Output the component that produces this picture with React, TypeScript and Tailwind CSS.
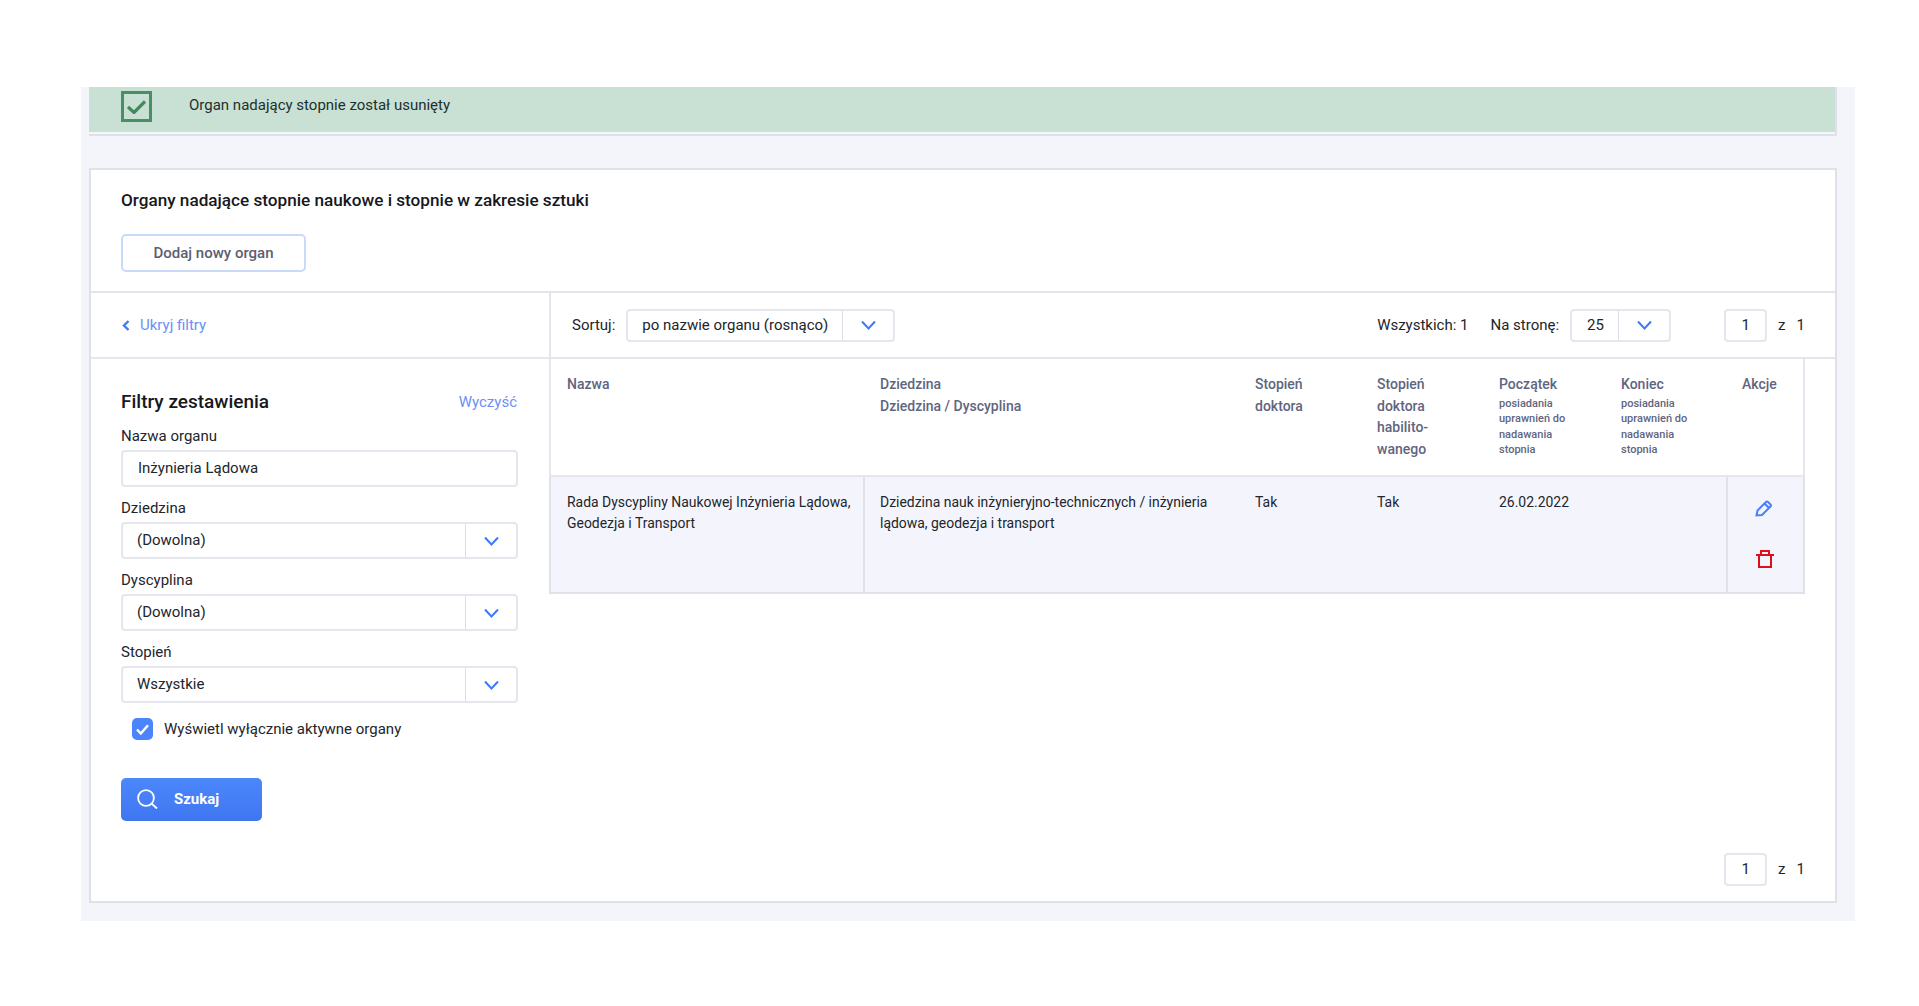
function Chevron() {
  return (
    <svg width="15" height="10" viewBox="0 0 15 10" fill="none" className="block">
      <path d="M1 1.5 L7.5 8.5 L14 1.5" stroke="#3f7bf6" strokeWidth="2" />
    </svg>
  );
}

function Label({ children }: { children: React.ReactNode }) {
  return <div className="h-[22px] text-[15px] leading-[25px] text-[#22252b]">{children}</div>;
}

function FilterSelect({ label, value }: { label: string; value: string }) {
  return (
    <div className="flex flex-col mb-[3px]">
      <div className="mb-[4px]">
        <Label>{label}</Label>
      </div>
      <SelectBox value={value} className="h-[37px] w-[397px]" textPad="pl-[14px]" arrowW="w-[51px]" />
    </div>
  );
}

function SelectBox({
  value,
  className,
  textPad,
  arrowW,
}: {
  value: string;
  className: string;
  textPad: string;
  arrowW: string;
}) {
  return (
    <div className={`flex items-stretch rounded-[4px] border-2 border-[#e6e7ee] bg-white ${className}`}>
      <div className={`flex flex-1 items-center text-[15px] text-[#22252b] ${textPad}`}>{value}</div>
      <div className={`flex items-center justify-center border-l border-[#dcdde5] ${arrowW}`}>
        <Chevron />
      </div>
    </div>
  );
}

function Pager() {
  return (
    <div className="flex items-center text-[15px] text-[#22252b]">
      <div className="flex h-[33px] w-[43px] items-center justify-center rounded-[4px] border-2 border-[#e6e7ee] bg-white">
        1
      </div>
      <span className="ml-[11px]">z</span>
      <span className="ml-[11px]">1</span>
    </div>
  );
}

function HeadCell({ className, children }: { className: string; children: React.ReactNode }) {
  return <div className={`pt-[15px] text-[14px] font-medium leading-[21.5px] text-[#5f6580] ${className}`}>{children}</div>;
}

function SubHead() {
  return (
    <div className="text-[11px] font-medium leading-[15.6px]">
      posiadania
      <br />
      uprawnień do
      <br />
      nadawania
      <br />
      stopnia
    </div>
  );
}

export default function App() {
  return (
    <div className="min-h-screen bg-white pt-[87px] [font-family:Roboto,sans-serif]">
      <div className="ml-[81px] flex h-[834px] w-[1774px] flex-col bg-[#f4f5fa] pl-[8px] pr-[18px]">
        <div className="h-[49px] w-full shrink-0 border-b-2 border-r-2 border-[#dfe0e8] bg-[#f4f8f6]">
          <div className="flex h-[45px] items-start bg-[#c9e0d4] pl-[32px]">
            <div className="mt-[4px] flex h-[31px] w-[31px] items-center justify-center border-[3px] border-[#4a8f63]">
              <svg width="19" height="14" viewBox="0 0 19 14" fill="none">
                <path d="M1 7 L7 12.5 L18 1.5" stroke="#44895c" strokeWidth="3.2" />
              </svg>
            </div>
            <div className="ml-[37px] mt-[8px] text-[15px] leading-[20px] text-[#22302a]">
              Organ nadający stopnie został usunięty
            </div>
          </div>
        </div>

        <div className="mt-[32px] flex h-[735px] w-full shrink-0 flex-col border-2 border-[#dfe0e8] bg-white">
          <div className="flex h-[123px] shrink-0 flex-col border-b-2 border-[#e3e4ec] pl-[30px]">
            <div className="mt-[20px] text-[17.15px] font-medium leading-[21px] text-[#16181d]">
              Organy nadające stopnie naukowe i stopnie w zakresie sztuki
            </div>
            <button className="mt-[23px] flex h-[38px] w-[185px] items-center justify-center rounded-[5px] border-2 border-[#c9d9f9] bg-white text-[15px] font-medium text-[#5b6070]">
              Dodaj nowy organ
            </button>
          </div>

          <div className="flex flex-1">
            <div className="flex w-[458px] shrink-0 flex-col">
              <div className="flex h-[66px] shrink-0 items-center border-b-2 border-[#e6e7ee] pl-[31px] text-[15px] text-[#6d8ff5]">
                <svg width="8" height="11" viewBox="0 0 8 11" fill="none">
                  <path d="M6.5 1 L2 5.5 L6.5 10" stroke="#3f7bf6" strokeWidth="2.4" />
                </svg>
                <span className="ml-[10px]">Ukryj filtry</span>
              </div>
              <div className="flex flex-col pl-[30px] pt-[31px]">
                <div className="flex w-[396px] items-center justify-between">
                  <div className="text-[19px] font-medium leading-[24px] text-[#16181d]">Filtry zestawienia</div>
                  <div className="text-[15px] text-[#6d8ff5]">Wyczyść</div>
                </div>
                <div className="mt-[10px] flex flex-col">
                  <div className="mb-[4px]">
                    <Label>Nazwa organu</Label>
                  </div>
                  <div className="mb-[9px] flex h-[37px] w-[397px] items-center rounded-[4px] border-2 border-[#e6e7ee] pl-[15px] text-[15px] text-[#22252b]">
                    Inżynieria Lądowa
                  </div>
                </div>
                <FilterSelect label="Dziedzina" value="(Dowolna)" />
                <div className="mt-[6px]">
                  <FilterSelect label="Dyscyplina" value="(Dowolna)" />
                </div>
                <div className="mt-[6px]">
                  <FilterSelect label="Stopień" value="Wszystkie" />
                </div>
                <div className="ml-[11px] mt-[12px] flex items-center">
                  <div className="flex h-[22px] w-[21px] items-center justify-center rounded-[5px] bg-[#4a85fb]">
                    <svg width="13" height="11" viewBox="0 0 13 11" fill="none">
                      <path d="M1 5.5 L4.8 9.5 L12 1.2" stroke="#fff" strokeWidth="2.4" />
                    </svg>
                  </div>
                  <span className="ml-[11px] text-[15px] text-[#22252b]">Wyświetl wyłącznie aktywne organy</span>
                </div>
                <button className="mt-[37px] flex h-[43px] w-[141px] items-center rounded-[5px] bg-gradient-to-b from-[#4c87fc] to-[#3f76f0] pl-[16px] text-[15px] font-bold text-white">
                  <svg width="21" height="20" viewBox="0 0 21 20" fill="none">
                    <circle cx="9" cy="9" r="7.9" stroke="#fff" strokeWidth="1.8" />
                    <path d="M14.5 14.5 L20 19.5" stroke="#fff" strokeWidth="1.8" />
                  </svg>
                  <span className="ml-[16px]">Szukaj</span>
                </button>
              </div>
            </div>

            <div className="flex min-w-0 flex-1 flex-col">
              <div className="flex h-[66px] shrink-0 items-center border-b-2 border-l-2 border-[#e3e4ec] pl-[21px] text-[15px] text-[#22252b]">
                <span>Sortuj:</span>
                <SelectBox
                  value="po nazwie organu (rosnąco)"
                  className="ml-[11px] h-[33px] w-[269px]"
                  textPad="pl-[14px]"
                  arrowW="w-[51px]"
                />
                <span className="ml-auto">Wszystkich: 1</span>
                <span className="ml-[22px]">Na stronę:</span>
                <SelectBox value="25" className="ml-[11px] h-[33px] w-[101px]" textPad="pl-[15px]" arrowW="w-[51px]" />
                <div className="ml-[53px] mr-[30px]">
                  <Pager />
                </div>
              </div>

              <div className="w-[1256px]">
                <div className="flex h-[118px] border-b-2 border-l-2 border-r-2 border-[#e6e7ee]">
                  <HeadCell className="w-[313px] pl-[16px]">Nazwa</HeadCell>
                  <HeadCell className="w-[375px] pl-[16px]">
                    Dziedzina
                    <br />
                    Dziedzina / Dyscyplina
                  </HeadCell>
                  <HeadCell className="w-[122px] pl-[16px]">
                    Stopień
                    <br />
                    doktora
                  </HeadCell>
                  <HeadCell className="w-[122px] pl-[16px]">
                    Stopień
                    <br />
                    doktora
                    <br />
                    habilito-
                    <br />
                    wanego
                  </HeadCell>
                  <HeadCell className="w-[122px] pl-[16px]">
                    Początek
                    <SubHead />
                  </HeadCell>
                  <HeadCell className="w-[121px] pl-[16px]">
                    Koniec
                    <SubHead />
                  </HeadCell>
                  <HeadCell className="pl-[16px]">Akcje</HeadCell>
                </div>
                <div className="flex h-[117px] border-b-2 border-l-2 border-r-2 border-[#e0e1e9] bg-[#f4f5fc] text-[13.95px] leading-[21px] text-[#22252b]">
                  <div className="w-[314px] border-r-2 border-[#e0e1e9] pl-[16px] pr-[8px] pt-[15px]">
                    Rada Dyscypliny Naukowej Inżynieria Lądowa, Geodezja i Transport
                  </div>
                  <div className="w-[374px] pl-[15px] pr-[10px] pt-[15px]">
                    Dziedzina nauk inżynieryjno-technicznych / inżynieria lądowa, geodezja i transport
                  </div>
                  <div className="w-[122px] pl-[16px] pt-[15px]">Tak</div>
                  <div className="w-[122px] pl-[16px] pt-[15px]">Tak</div>
                  <div className="w-[122px] pl-[16px] pt-[15px]">26.02.2022</div>
                  <div className="w-[121px]" />
                  <div className="flex flex-1 flex-col items-center border-l-2 border-[#e0e1e9] pr-[4px] pt-[22px]">
                    <svg width="18" height="18" viewBox="0 0 18 18" fill="none">
                      <path
                        d="M1.5 16.5 L2.5 11.5 L11 3 Q12 2 13 3 L15.5 5.5 Q16.5 6.5 15.5 7.5 L7 16 Z M9.5 4.5 L14 9"
                        stroke="#4a7ff5"
                        strokeWidth="2"
                      />
                    </svg>
                    <svg width="18" height="18" viewBox="0 0 18 18" fill="none" className="ml-[2px] mt-[33px]">
                      <path d="M0 5 H18 M3 5 V17 H15 V5 M5 5 V1 H13 V5" stroke="#dc0f1c" strokeWidth="2" />
                    </svg>
                  </div>
                </div>
              </div>

              <div className="mt-auto flex justify-end pb-[15px] pr-[30px]">
                <Pager />
              </div>
            </div>
          </div>
        </div>
      </div>
    </div>
  );
}
